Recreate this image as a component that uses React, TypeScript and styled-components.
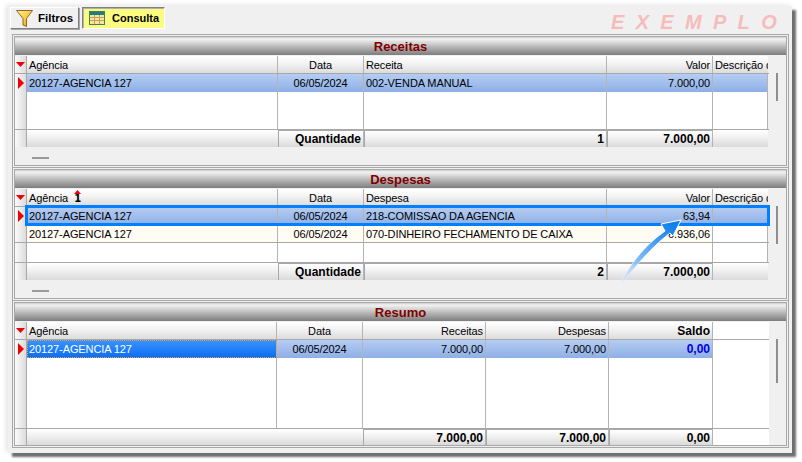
import React from "react";
import styled, { createGlobalStyle } from "styled-components";

const Global = createGlobalStyle`
  html, body { margin: 0; padding: 0; background: #fff; }
  body { font-family: "Liberation Sans", Arial, sans-serif; font-size: 11px; color: #000; }
`;

const Page = styled.div`
  width: 802px;
  height: 462px;
  overflow: hidden;
  padding: 6px 0 0 8px;
  box-sizing: border-box;
`;
const Win = styled.div`
  position: relative;
  width: 784px;
  height: 447px;
  background: #f0f0f0;
  box-shadow: 4px 4px 2px #6e6e6e, -2px -1px 5px #e4e4e4;
  display: flex;
  flex-direction: column;
  padding: 1px 3px 0 4px;
  box-sizing: border-box;
`;
const Toolbar = styled.div`
  height: 27px;
  flex: none;
  display: flex;
  align-items: flex-start;
  gap: 3px;
  margin-left: -2px;
`;
const Tab = styled.div<{ $on?: boolean }>`
  height: 22px;
  box-sizing: border-box;
  display: flex;
  align-items: center;
  font-weight: 700;
  font-size: ${(p) => (p.$on ? 11 : 11.5)}px;
  gap: ${(p) => (p.$on ? 7 : 5)}px;
  width: ${(p) => (p.$on ? 83 : 69)}px;
  padding-left: ${(p) => (p.$on ? 6 : 5)}px;
  border: 1px solid;
  border-color: ${(p) => (p.$on ? "#808080 #fff #fff #808080" : "#fff #808080 #808080 #fff")};
  background: ${(p) => (p.$on ? "#fbfb80" : "#f0f0f0")};
  box-shadow: ${(p) => (p.$on ? "inset 1px 1px 0 #b0b0b0" : "1px 1px 0 #a8a8a8")};
`;
const Watermark = styled.div`
  margin: 4px -11px 0 auto;
  padding-right: 12px;
  font: italic 700 20px "Liberation Sans", sans-serif;
  letter-spacing: 11.3px;
  color: #f6bcbc;
  line-height: 22px;
`;
const Panel = styled.section<{ $h: number }>`
  height: ${(p) => p.$h}px;
  width: 777px;
  flex: none;
  box-sizing: border-box;
  border: 1px solid #a8a8a8;
  outline: 1px solid #a8a8a8;
  outline-offset: -3px;
  padding: 2px;
  margin-bottom: -1px;
  background: #f0f0f0;
  display: flex;
  flex-direction: column;
`;
const Title = styled.div`
  height: 18px;
  flex: none;
  overflow: hidden;
  background: linear-gradient(#cfcfcf, #f2f2f2 12%, #b0b0b0 60%, #7d7d7d);
  color: #800000;
  font-weight: 700;
  font-size: 13px;
  line-height: 20px;
  text-align: center;
  margin-bottom: 1px;
`;
const Body = styled.div`
  flex: 1;
  display: flex;
  min-height: 0;
`;
const Grid = styled.div`
  width: 754px;
  flex: none;
  display: flex;
  flex-direction: column;
`;
const Gutter = styled.div<{ $h: number }>`
  flex: 1;
  display: flex;
  justify-content: center;
  padding-top: 17px;
  margin-left: -1px;
  &::before {
    content: "";
    display: block;
    width: 2px;
    height: ${(p) => p.$h}px;
    background: #8e8e8e;
  }
`;
const Row = styled.div<{ $h: number; $focus?: boolean; $line?: boolean }>`
  position: relative;
  display: flex;
  height: ${(p) => p.$h}px;
  flex: none;
  box-sizing: border-box;
  ${(p) => (p.$line ? "border-bottom: 1px solid #a8a8a8;" : "")}
  ${(p) =>
    p.$focus
      ? `&::after { content: ""; position: absolute; left: 10px; right: -1px; top: -2px; bottom: -1px; border: 3px solid #0080ff; pointer-events: none; z-index: 2; }`
      : ""}
`;
const Ind = styled.div`
  width: 11px;
  flex: none;
  background: linear-gradient(90deg, #fafafa, #dcdcdc);
  border-right: 1px solid #a8a8a8;
  display: flex;
  align-items: center;
  justify-content: center;
  box-sizing: content-box;
`;
type Kind = "head" | "sel" | "cur" | "alt" | "plain" | "foot";
const bgOf: Record<Kind, string> = {
  head: "linear-gradient(#ffffff, #f4f4f4 40%, #dcdcdc)",
  sel: "linear-gradient(#b5cdf3, #8eafe6)",
  cur: "linear-gradient(#3a94ff, #0a6cf2)",
  alt: "#fffcf3",
  plain: "#fff",
  foot: "linear-gradient(#ffffff, #f2f2f2 40%, #dadada)",
};
const Cell = styled.div<{ $w: number; $k: Kind; $right?: boolean; $bold?: boolean; $sep?: boolean; $blue?: boolean; $boxed?: boolean }>`
  width: ${(p) => p.$w}px;
  flex: none;
  box-sizing: border-box;
  background: ${(p) => bgOf[p.$k]};
  ${(p) => (p.$sep === false ? "" : "border-right: 1px solid #b4b4b4;")}
  ${(p) => (p.$boxed ? "border-left: 1px solid #a8a8a8; border-top: 1px solid #a8a8a8;" : "")}
  padding: ${(p) => (p.$k === "head" ? "1px" : "0")} 2px 0 2px;
  font-size: ${(p) => (p.$bold ? 12 : 11)}px;
  font-weight: ${(p) => (p.$bold ? 700 : 400)};
  letter-spacing: ${(p) => (p.$bold ? 0 : -0.1)}px;
  color: ${(p) => (p.$blue ? "#0000e6" : p.$k === "cur" ? "#fff" : "#000")};
  white-space: nowrap;
  overflow: hidden;
  display: flex;
  align-items: center;
  justify-content: ${(p) => (p.$right ? "flex-end" : "flex-start")};
  ${(p) => (p.$k === "cur" ? "outline: 1px dotted #e8a040; outline-offset: -1px;" : "")}
`;
const Center = styled.span`
  width: 100%;
  text-align: center;
`;
const Strip = styled.div`
  flex: 1;
  padding: 10px 0 0 17px;
  &::before {
    content: "";
    display: block;
    width: 17px;
    height: 2px;
    background: #9a9a9a;
  }
`;
const Sort = styled.span`
  display: inline-flex;
  flex-direction: column;
  align-items: center;
  margin: -3px 0 0 6px;
  font: 700 10px/9px "DejaVu Sans", sans-serif;
`;
const Arrow = styled.svg`
  position: absolute;
  left: 592px;
  top: 208px;
  pointer-events: none;
  z-index: 3;
`;

const Down = () => (
  <svg width="9" height="5" viewBox="0 0 9 5"><path d="M0 0h9L4.5 5z" fill="#f00000" /></svg>
);
const Right = () => (
  <svg width="6" height="12" viewBox="0 0 6 12"><path d="M0 0l6 6-6 6z" fill="#f00000" /></svg>
);
const Up = () => (
  <svg width="7" height="4" viewBox="0 0 7 4"><path d="M0 4h7L3.5 0z" fill="#f00000" /></svg>
);
const Funnel = () => (
  <svg width="17" height="17" viewBox="0 0 17 17">
    <defs>
      <linearGradient id="fg" x1="0" y1="0" x2="1" y2="1">
        <stop offset="0" stopColor="#fff0a0" />
        <stop offset="0.6" stopColor="#fbc52c" />
        <stop offset="1" stopColor="#e08a10" />
      </linearGradient>
    </defs>
    <path d="M.5 .5h16L10.5 8.5V16.5L7 15V8.5z" fill="url(#fg)" stroke="#8a6a2c" strokeWidth="1" />
  </svg>
);
const Table = () => (
  <svg width="16" height="14" viewBox="0 0 16 14">
    <rect x=".5" y=".5" width="15" height="13" fill="#f7e6a6" stroke="#40806a" />
    <rect x="1" y="1" width="14" height="3" fill="#1f7f74" />
    <path d="M1 6.5h14M1 9.5h14M5.5 4v9M10.5 4v9" stroke="#c8a050" fill="none" />
  </svg>
);

const W = [251, 86, 243, 106, 55];
const W3 = [250, 86, 123, 123, 104, 56];

const Head = ({ w, labels, sort }: { w: number[]; labels: string[]; sort?: boolean }) => (
  <Row $h={18} $line>
    <Ind><Down /></Ind>
    {labels.map((l, i) => {
      if (l === "") return <Cell key={i} $w={w[i]} $k="plain" $sep={false} />;
      const right = ["Valor", "Receitas", "Despesas", "Saldo"].includes(l);
      return (
        <Cell key={i} $w={w[i]} $k="head" $right={right} $bold={l === "Saldo"} $sep={i !== labels.length - 1 || l === "Saldo"}>
          {l === "Data" ? <Center>{l}</Center> : l}
          {sort && i === 0 ? <Sort><Up />1</Sort> : null}
        </Cell>
      );
    })}
  </Row>
);

const DataRow = ({ cells, kind, current, focus, line }: { cells: string[]; kind: Kind; current?: boolean; focus?: boolean; line?: boolean }) => (
  <Row $h={18} $focus={focus} $line={line}>
    <Ind>{current ? <Right /> : null}</Ind>
    {cells.map((c, i) => (
      <Cell key={i} $w={W[i]} $k={kind === "alt" && c === "" ? "plain" : kind} $right={/^[\d.]+,\d\d$/.test(c)}>
        {c === "06/05/2024" ? <Center>{c}</Center> : c}
      </Cell>
    ))}
  </Row>
);

const Filler = ({ h, w }: { h: number; w: number[] }) => (
  <Row $h={h} $line>
    <Ind />
    {w.map((x, i) => (
      <Cell key={i} $w={x} $k="plain" $sep={i !== 5} />
    ))}
  </Row>
);

const Foot = ({ q, total }: { q: string; total: string }) => (
  <Row $h={17}>
    <Ind />
    <Cell $w={251} $k="foot" $sep={false} />
    <Cell $w={86} $k="foot" $right $bold $boxed>Quantidade</Cell>
    <Cell $w={243} $k="foot" $right $bold $boxed>{q}</Cell>
    <Cell $w={106} $k="foot" $right $bold $boxed>{total}</Cell>
    <Cell $w={55} $k="foot" $sep={false} />
  </Row>
);

export default function App() {
  return (
    <Page>
      <Global />
      <Win>
        <Toolbar>
          <Tab><Funnel />Filtros</Tab>
          <Tab $on><Table />Consulta</Tab>
          <Watermark>EXEMPLO</Watermark>
        </Toolbar>

        <Panel $h={134}>
          <Title>Receitas</Title>
          <Body>
            <Grid>
              <Head w={W} labels={["Agência", "Data", "Receita", "Valor", "Descrição da"]} />
              <DataRow kind="sel" current cells={["20127-AGENCIA 127", "06/05/2024", "002-VENDA MANUAL", "7.000,00", ""]} />
              <Filler h={38} w={W} />
              <Foot q="1" total="7.000,00" />
              <Strip />
            </Grid>
            <Gutter $h={28} />
          </Body>
        </Panel>

        <Panel $h={134}>
          <Title>Despesas</Title>
          <Body>
            <Grid>
              <Head w={W} sort labels={["Agência", "Data", "Despesa", "Valor", "Descrição da"]} />
              <DataRow kind="sel" current focus cells={["20127-AGENCIA 127", "06/05/2024", "218-COMISSAO DA AGENCIA", "63,94", ""]} />
              <DataRow kind="alt" line cells={["20127-AGENCIA 127", "06/05/2024", "070-DINHEIRO FECHAMENTO DE CAIXA", "6.936,06", ""]} />
              <Filler h={20} w={W} />
              <Foot q="2" total="7.000,00" />
              <Strip />
            </Grid>
            <Gutter $h={38} />
          </Body>
        </Panel>

        <Panel $h={148}>
          <Title>Resumo</Title>
          <Body>
            <Grid>
              <Head w={W3} labels={["Agência", "Data", "Receitas", "Despesas", "Saldo", ""]} />
              <Row $h={18}>
                <Ind><Right /></Ind>
                <Cell $w={250} $k="cur">20127-AGENCIA 127</Cell>
                <Cell $w={86} $k="sel"><Center>06/05/2024</Center></Cell>
                <Cell $w={123} $k="sel" $right>7.000,00</Cell>
                <Cell $w={123} $k="sel" $right>7.000,00</Cell>
                <Cell $w={104} $k="sel" $right $bold $blue>0,00</Cell>
                <Cell $w={56} $k="plain" $sep={false} />
              </Row>
              <Filler h={71} w={W3} />
              <Row $h={16}>
                <Ind />
                <Cell $w={336} $k="foot" $sep={false} />
                <Cell $w={123} $k="foot" $right $bold $boxed>7.000,00</Cell>
                <Cell $w={123} $k="foot" $right $bold $boxed>7.000,00</Cell>
                <Cell $w={104} $k="foot" $right $bold $boxed>0,00</Cell>
                <Cell $w={56} $k="plain" $sep={false} />
              </Row>
            </Grid>
            <Gutter $h={44} />
          </Body>
        </Panel>

        <Arrow width="100" height="90" viewBox="0 0 100 90">
          <defs>
            <linearGradient id="ag" x1="0.1" y1="1" x2="0.8" y2="0">
              <stop offset="0" stopColor="#ffffff" stopOpacity="0" />
              <stop offset="0.45" stopColor="#7fbdf7" />
              <stop offset="1" stopColor="#0f80ee" />
            </linearGradient>
            <linearGradient id="as" x1="0.1" y1="1" x2="0.6" y2="0.2">
              <stop offset="0" stopColor="#ffffff" stopOpacity="0" />
              <stop offset="1" stopColor="#ffffff" />
            </linearGradient>
          </defs>
          <path
            d="M12 84 C24 60 40 34 65 17 L61 10 L81 6 L73 22 L70 19 C48 36 28 60 12 84 Z"
            fill="url(#ag)"
            stroke="url(#as)"
            strokeWidth="1"
          />
        </Arrow>
      </Win>
    </Page>
  );
}
